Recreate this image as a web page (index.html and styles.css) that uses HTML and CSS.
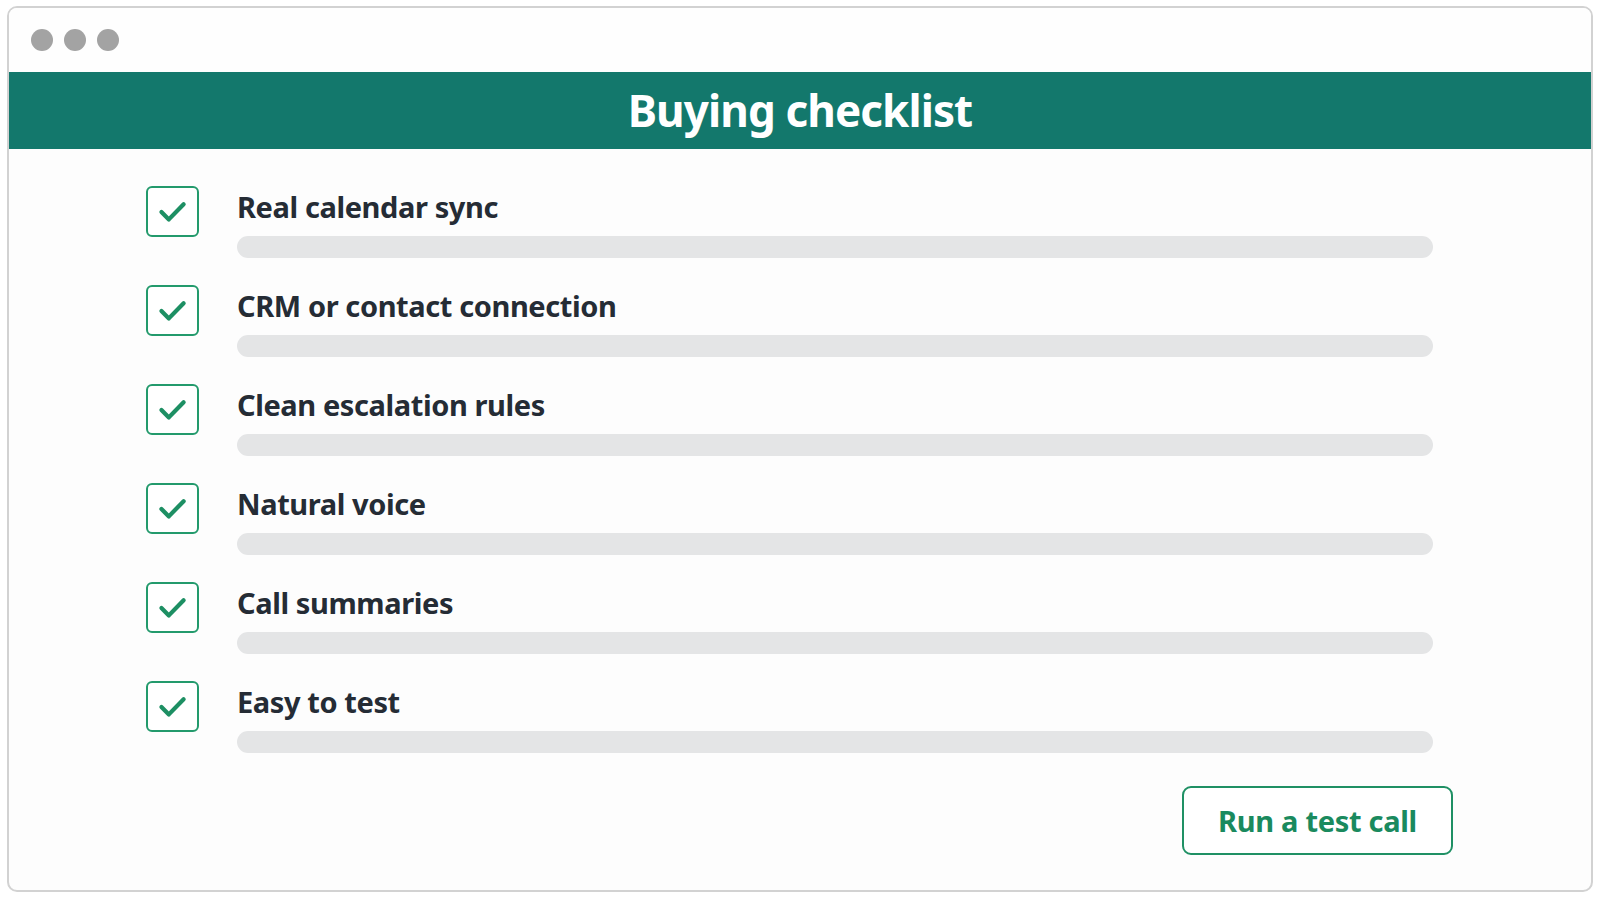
FILE: index.html
```html
<!DOCTYPE html>
<html lang="en">
<head>
<meta charset="utf-8">
<title>Buying checklist</title>
<link rel="stylesheet" href="styles.css">
</head>
<body>
<div class="window">
  <div class="titlebar">
    <span class="dot"></span><span class="dot"></span><span class="dot"></span>
  </div>
  <div class="header"><h1 class="title">Buying checklist</h1></div>
  <div class="content">
    <ul class="list">
      <li class="item">
        <span class="box"><svg viewBox="0 0 52 52" width="48" height="48"><path d="M13.5 26 L21.5 34 L37.5 17.5" /></svg></span>
        <div class="body"><div class="label">Real calendar sync</div><div class="bar"></div></div>
      </li>
      <li class="item">
        <span class="box"><svg viewBox="0 0 52 52" width="48" height="48"><path d="M13.5 26 L21.5 34 L37.5 17.5" /></svg></span>
        <div class="body"><div class="label">CRM or contact connection</div><div class="bar"></div></div>
      </li>
      <li class="item">
        <span class="box"><svg viewBox="0 0 52 52" width="48" height="48"><path d="M13.5 26 L21.5 34 L37.5 17.5" /></svg></span>
        <div class="body"><div class="label">Clean escalation rules</div><div class="bar"></div></div>
      </li>
      <li class="item">
        <span class="box"><svg viewBox="0 0 52 52" width="48" height="48"><path d="M13.5 26 L21.5 34 L37.5 17.5" /></svg></span>
        <div class="body"><div class="label">Natural voice</div><div class="bar"></div></div>
      </li>
      <li class="item">
        <span class="box"><svg viewBox="0 0 52 52" width="48" height="48"><path d="M13.5 26 L21.5 34 L37.5 17.5" /></svg></span>
        <div class="body"><div class="label">Call summaries</div><div class="bar"></div></div>
      </li>
      <li class="item">
        <span class="box"><svg viewBox="0 0 52 52" width="48" height="48"><path d="M13.5 26 L21.5 34 L37.5 17.5" /></svg></span>
        <div class="body"><div class="label">Easy to test</div><div class="bar"></div></div>
      </li>
    </ul>
    <div class="actions">
      <button class="btn" type="button">Run a test call</button>
    </div>
  </div>
</div>
</body>
</html>
```

FILE: styles.css
```css
* { box-sizing: border-box; }
html, body { margin: 0; padding: 0; background: #ffffff; }
body {
  font-family: "Noto Sans", "Open Sans", sans-serif;
  width: 1600px;
  height: 900px;
  padding: 6px 7px 8px 7px;
}
.window {
  width: 1586px;
  height: 886px;
  border: 2px solid #d2d2d2;
  border-radius: 10px;
  background: #fdfdfd;
  overflow: hidden;
  display: flex;
  flex-direction: column;
}
.titlebar {
  height: 64px;
  display: flex;
  align-items: center;
  gap: 11px;
  padding: 0 0 0 22px;
  background: #fefefe;
}
.dot {
  width: 22px;
  height: 22px;
  border-radius: 50%;
  background: #a3a3a3;
}
.header {
  height: 77px;
  background: #13786c;
  display: flex;
  align-items: center;
  justify-content: center;
}
.title {
  margin: 0;
  color: #ffffff;
  font-size: 44px;
  font-weight: 700;
  letter-spacing: -0.9px;
  line-height: 1;
  padding-bottom: 2px;
}
.content {
  padding: 37px 138px 0 137px;
}
.list {
  list-style: none;
  margin: 0;
  padding: 0;
  display: flex;
  flex-direction: column;
  gap: 27px;
}
.item {
  display: flex;
  align-items: flex-start;
  gap: 38px;
}
.box {
  flex: none;
  width: 53px;
  height: 51px;
  border: 2.5px solid #239a6c;
  border-radius: 6px;
  display: flex;
  align-items: center;
  justify-content: center;
  background: #ffffff;
}
.box svg path {
  fill: none;
  stroke: #1d8f63;
  stroke-width: 4.6;
  stroke-linecap: round;
  stroke-linejoin: round;
}
.body {
  flex: 1;
  padding-right: 20px;
}
.label {
  font-size: 29px;
  font-weight: 700;
  line-height: 40px;
  margin-top: 1px;
  margin-bottom: -1px;
  color: #252c35;
  letter-spacing: -0.4px;
}
.bar {
  margin-top: 10px;
  height: 22px;
  border-radius: 11px;
  background: #e4e5e6;
}
.actions {
  display: flex;
  justify-content: flex-end;
  margin-top: 33px;
}
.btn {
  width: 271px;
  height: 69px;
  border: 2.5px solid #1f9064;
  border-radius: 9px;
  background: #ffffff;
  color: #1a8a5e;
  font-family: "Noto Sans", "Open Sans", sans-serif;
  font-size: 29px;
  font-weight: 700;
  letter-spacing: -0.3px;
  padding: 0;
  cursor: pointer;
}
```
